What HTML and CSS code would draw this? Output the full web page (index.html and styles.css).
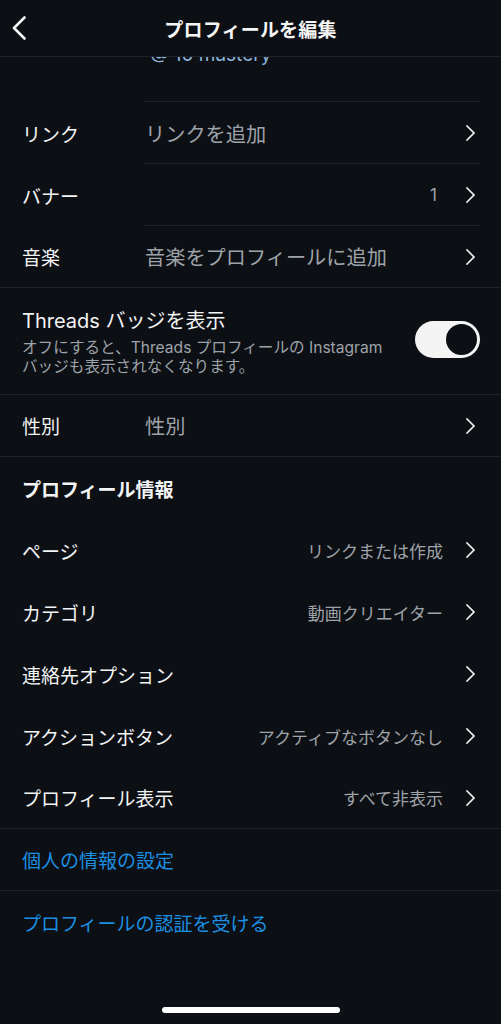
FILE: index.html
```html
<!DOCTYPE html>
<html lang="ja">
<head>
<meta charset="utf-8">
<link rel="stylesheet" href="styles.css">
</head>
<body>
<div class="screen">
  <header class="topbar">
    <svg class="back" viewBox="0 0 16 24" width="16" height="24"><path d="M13.5 1.5 L3 12 L13.5 22.5" fill="none" stroke="#f5f5f5" stroke-width="2.6" stroke-linecap="round" stroke-linejoin="round"/></svg>
    <h1 class="title">プロフィールを編集</h1>
  </header>

  <div class="clip">
    <div class="clip-text"><span class="at">@</span> 10 mastery</div>
  </div>

  <div class="row inset">
    <span class="label">リンク</span>
    <span class="value">リンクを追加</span>
    <span class="chev"></span>
  </div>
  <div class="row inset">
    <span class="label">バナー</span>
    <span class="value right count">1</span>
    <span class="chev"></span>
  </div>
  <div class="row full">
    <span class="label">音楽</span>
    <span class="value">音楽をプロフィールに追加</span>
    <span class="chev"></span>
  </div>

  <div class="toggle-row full">
    <div class="toggle-text">
      <div class="toggle-title">Threads バッジを表示</div>
      <div class="toggle-sub">オフにすると、Threads プロフィールの Instagram<br>バッジも表示されなくなります。</div>
    </div>
    <div class="switch"><div class="knob"></div></div>
  </div>

  <div class="row full">
    <span class="label">性別</span>
    <span class="value">性別</span>
    <span class="chev"></span>
  </div>

  <div class="section-title">プロフィール情報</div>

  <div class="row">
    <span class="label wide">ページ</span>
    <span class="value small right">リンクまたは作成</span>
    <span class="chev"></span>
  </div>
  <div class="row">
    <span class="label wide">カテゴリ</span>
    <span class="value small right">動画クリエイター</span>
    <span class="chev"></span>
  </div>
  <div class="row">
    <span class="label wide">連絡先オプション</span>
    <span class="value small right"></span>
    <span class="chev"></span>
  </div>
  <div class="row">
    <span class="label wide">アクションボタン</span>
    <span class="value small right">アクティブなボタンなし</span>
    <span class="chev"></span>
  </div>
  <div class="row full">
    <span class="label wide">プロフィール表示</span>
    <span class="value small right">すべて非表示</span>
    <span class="chev"></span>
  </div>

  <div class="link-row full">個人の情報の設定</div>
  <div class="link-row">プロフィールの認証を受ける</div>

  <div class="spacer"></div>
  <div class="home-bar"></div>
</div>
</body>
</html>
```

FILE: styles.css
```css
* { box-sizing: border-box; margin: 0; padding: 0; }

html, body {
  width: 501px;
  height: 1024px;
  background: #0c0f14;
  overflow: hidden;
}

body {
  font-family: "Inter", "Noto Sans CJK JP", sans-serif;
  color: #f3f4f5;
}

.screen {
  width: 501px;
  height: 1024px;
  display: flex;
  flex-direction: column;
  background: #0c0f14;
}

.topbar {
  height: 57px;
  flex: none;
  display: flex;
  align-items: center;
  justify-content: center;
  border-bottom: 1px solid #1f2329;
  position: relative;
  z-index: 2;
  background: #0c0f14;
}

.back {
  position: absolute;
  left: 11px;
  top: 16px;
}

.title {
  font-size: 19px;
  font-weight: 700;
  letter-spacing: 0.2px;
  color: #f5f5f5;
}

.clip {
  height: 45px;
  flex: none;
  overflow: hidden;
  margin-left: 144px;
  margin-right: 21px;
  border-bottom: 1px solid #1f2329;
}

.clip-text {
  margin-top: -14px;
  margin-left: 6px;
  font-size: 19px;
  line-height: 23px;
  color: #8db7de;
}

.row {
  height: 62px;
  flex: none;
  display: flex;
  align-items: center;
  padding-left: 22px;
  padding-right: 25px;
  position: relative;
}

.row.inset::after {
  content: "";
  position: absolute;
  left: 144px;
  right: 21px;
  bottom: 0;
  height: 1px;
  background: #1f2329;
}

.full { border-bottom: 1px solid #1f2329; }

.label {
  width: 123px;
  flex: none;
  font-size: 19px;
  color: #f3f4f5;
}

.label.wide { width: auto; }

.value {
  flex: 1;
  font-size: 20.2px;
  color: #9ea3a9;
  white-space: nowrap;
}

.value.right { text-align: right; margin-right: 21px; }

.value.small { font-size: 17px; }

.value.count { font-size: 17px; margin-right: 27px; }

.chev {
  width: 12px;
  height: 18px;
  flex: none;
  position: relative;
}

.chev::before {
  content: "";
  position: absolute;
  left: -3px;
  top: 3px;
  width: 10px;
  height: 10px;
  border-right: 2.2px solid #f0f0f0;
  border-top: 2.2px solid #f0f0f0;
  transform: rotate(45deg);
  border-radius: 1px;
}

.toggle-row {
  height: 107px;
  flex: none;
  display: flex;
  align-items: center;
  padding: 0 21px 0 22px;
}

.toggle-text { flex: 1; padding-top: 2px; }

.toggle-title {
  font-size: 20px;
  line-height: 25px;
  color: #f3f4f5;
  margin-bottom: 4px;
}

.toggle-sub {
  font-size: 15.6px;
  line-height: 19px;
  color: #9ea3a9;
}

.switch {
  width: 65px;
  height: 37px;
  border-radius: 19px;
  background: #f4f4f4;
  flex: none;
  position: relative;
  margin-top: -4px;
}

.knob {
  position: absolute;
  right: 3px;
  top: 3px;
  width: 31px;
  height: 31px;
  border-radius: 50%;
  background: #0c0f14;
}

.section-title {
  height: 62px;
  flex: none;
  display: flex;
  align-items: center;
  padding-left: 22px;
  font-size: 19px;
  font-weight: 700;
  color: #f3f4f5;
}

.link-row {
  height: 62px;
  flex: none;
  display: flex;
  align-items: center;
  padding-left: 22px;
  font-size: 19px;
  color: #1b8fe2;
}

.link-row:last-of-type { font-size: 19.6px; }

.spacer { flex: 1; }

.home-bar {
  width: 178px;
  height: 6px;
  border-radius: 3px;
  background: #ffffff;
  align-self: center;
  margin-bottom: 11px;
  flex: none;
}
```
